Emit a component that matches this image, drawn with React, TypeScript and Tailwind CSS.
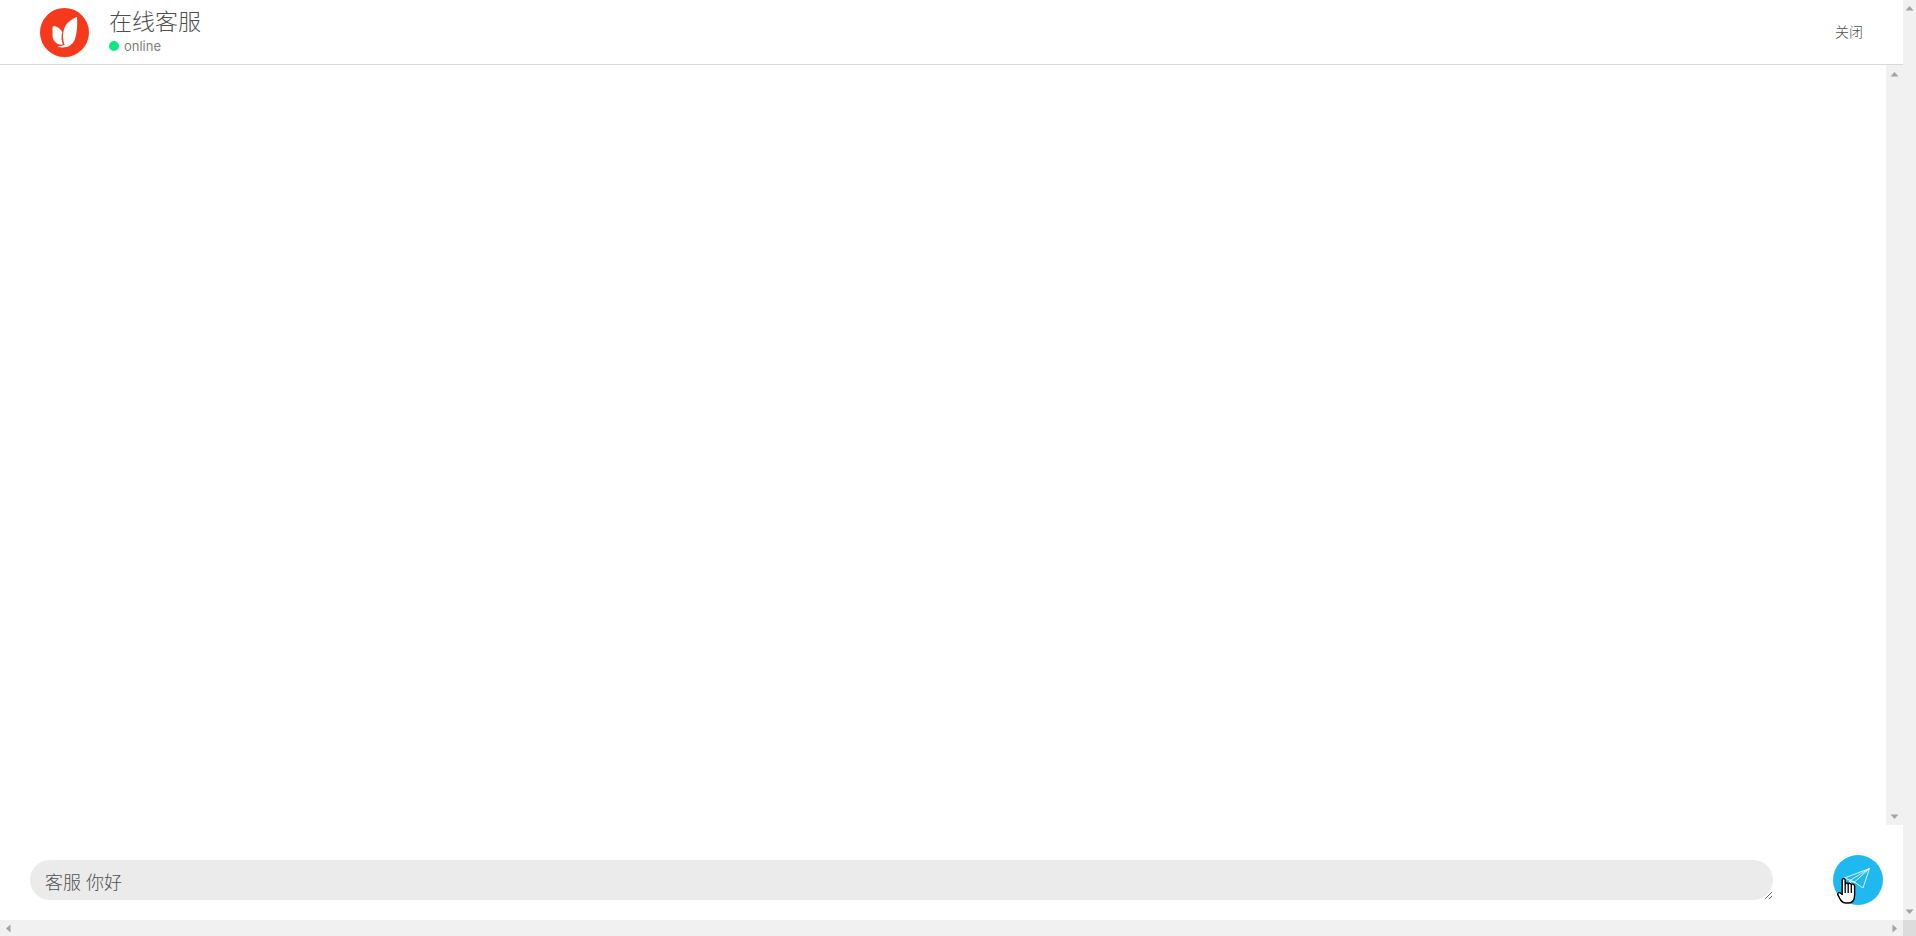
import React from "react";

const cjk = '"Liberation Sans","Noto Sans CJK SC",sans-serif';

function Arrow({ dir }: { dir: "up" | "down" | "left" | "right" }) {
  const pts = {
    up: "0.5,6.5 4.5,2 8.5,6.5",
    down: "0.5,2.5 4.5,7 8.5,2.5",
    left: "6.5,0.5 2,4.5 6.5,8.5",
    right: "2.5,0.5 7,4.5 2.5,8.5",
  }[dir];
  return (
    <svg width="9" height="9" viewBox="0 0 9 9" className="block">
      <polygon points={pts} fill="#a3a3a3" />
    </svg>
  );
}

function Logo() {
  return (
    <svg width="49" height="49" viewBox="0 0 49 49" className="block shrink-0">
      <circle cx="24.5" cy="24.5" r="24.5" fill="#f4391c" />
      <path d="M12.5 20.5 C12.5 18 14 17.6 16 18.4 C19 19.6 21.4 21.6 22.3 24.5 C21 29 21.4 33 23 36.5 C17 37.5 12.5 33 12.5 27 Z" fill="#fff" />
      <path d="M37 9 C37.6 17 37 25 35 31 C33 36.5 28.5 39.5 23 39.5 C21 39.5 19 39 17 38 C20 38.4 22.5 38 24.6 37 C22.6 32 22.6 26 24 21 C26 15.5 31 11 37 9 Z" fill="#fff" />
    </svg>
  );
}

function Plane() {
  return (
    <svg width="27" height="21" viewBox="0 0 27 21" fill="none" stroke="#fff" strokeOpacity="0.9" strokeWidth="0.9" className="block">
      <path d="M1.5 10 L26.5 0.5 L20 20 L11.5 14 Z" />
      <path d="M26.5 0.5 L6 13 L11.5 14" />
      <path d="M26.5 0.5 L11.5 14 L10 17" />
      <path d="M6 13 L10 17" />
    </svg>
  );
}

function Hand() {
  return (
    <svg width="19" height="26" viewBox="0 0 19 26" className="block">
      <path
        d="M5.2 2 C5.2 .2 8.2 .2 8.2 2 L8.2 6 C9 4.6 10.8 4.8 11.2 6 C12 4.9 13.8 5.2 14.2 6.6 C15.2 5.6 17.6 6.2 17.6 8.2 L17.6 17 C17.6 21.5 15.8 25 11.4 25 L9 25 C6.4 25 5 24 3.6 22 L1 17.2 C0 15.4 2.2 13.8 3.6 15.2 L5.2 16.4 Z"
        fill="#fff"
        stroke="#000"
        strokeWidth="1.4"
        strokeLinejoin="round"
      />
      <path d="M8.2 6 V15 M11.2 6 V15 M14.3 7 V15" stroke="#000" strokeWidth="1.3" />
    </svg>
  );
}

export default function App() {
  return (
    <div className="w-[1916px] h-[936px] flex flex-col overflow-hidden bg-[#f1f1f1]" style={{ fontFamily: cjk }}>
      <div className="flex-1 flex min-h-0">
        <div className="flex-1 flex flex-col min-w-0 bg-white">
          <header className="h-[65px] shrink-0 flex items-center border-b border-[#d9d9d9] pl-[40px] pr-[40px]">
            <Logo />
            <div className="ml-[20px] flex flex-col -mt-[4px]">
              <div className="text-[23px] leading-[28px] font-light text-[#4f4f4f]">在线客服</div>
              <div className="flex items-center mt-[3px] h-[14px]">
                <span className="w-[10px] h-[10px] rounded-full bg-[#0be881]" />
                <span className="ml-[5px] text-[13px] leading-[14px] text-[#808080]" style={{ fontFamily: 'Inter,sans-serif' }}>online</span>
              </div>
            </div>
            <div className="ml-auto text-[14px] font-light text-[#4f4f4f]">关闭</div>
          </header>
          <div className="flex-1 flex min-h-0">
            <div className="flex-1 bg-white" />
            <div className="w-[17px] bg-[#f1f1f1] flex flex-col items-center justify-between pt-[5px] pb-[4px]">
              <Arrow dir="up" />
              <Arrow dir="down" />
            </div>
          </div>
          <div className="h-[95px] shrink-0 flex items-start pt-[35px] pl-[30px] pr-[20px] bg-white">
            <textarea
              placeholder="客服 你好"
              className="w-[1743px] h-[40px] rounded-[20px] bg-[#ebebeb] px-[15px] pt-[10px] pb-[3px] text-[18px] leading-[27px] font-light outline-none resize-y placeholder:text-[#505050] overflow-hidden"
            />
            <div className="ml-auto -mt-[5px] relative w-[50px] h-[50px] rounded-full bg-[#20b9ef] flex items-center justify-center">
              <div className="-ml-[4px] -mt-[3px]"><Plane /></div>
              <div className="absolute left-[4px] top-[23px]"><Hand /></div>
            </div>
          </div>
        </div>
        <div className="w-[13px] shrink-0 flex flex-col items-center justify-between py-[4px] bg-[#f1f1f1]">
          <Arrow dir="up" />
          <Arrow dir="down" />
        </div>
      </div>
      <div className="h-[16px] shrink-0 flex items-center bg-[#f1f1f1]">
        <div className="flex-1 flex items-center justify-between px-[4px] h-full">
          <Arrow dir="left" />
          <Arrow dir="right" />
        </div>
        <div className="w-[13px] h-full bg-[#dcdcdc]" />
      </div>
    </div>
  );
}
